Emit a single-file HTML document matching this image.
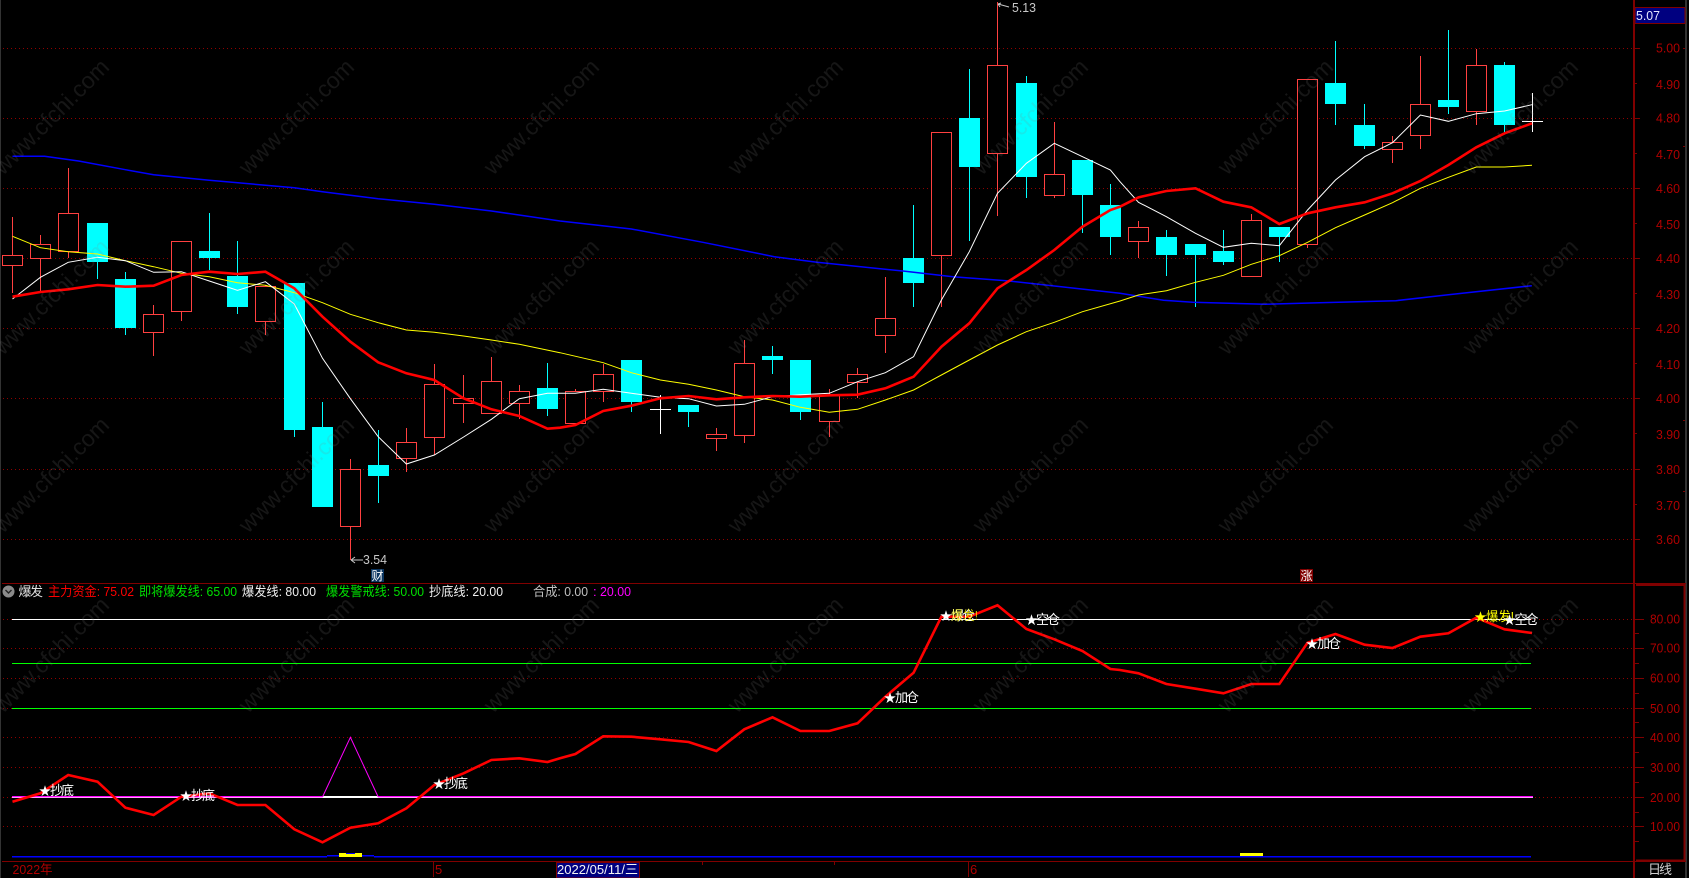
<!DOCTYPE html>
<html lang="zh">
<head>
<meta charset="utf-8">
<title>爆发</title>
<style>
html,body{margin:0;padding:0;background:#000;width:1689px;height:878px;overflow:hidden}
svg{display:block;position:absolute;left:0;top:0}
text{font-family:"Liberation Sans","Noto Sans CJK SC",sans-serif;font-size:13px}
.ax{fill:#b00000}
.wm text{font-size:23px;fill:rgba(128,128,128,.17)}
</style>
</head>
<body>
<svg width="1689" height="878" viewBox="0 0 1689 878" xmlns="http://www.w3.org/2000/svg">
<rect width="1689" height="878" fill="#000"/>
<rect x="0" y="0" width="1" height="878" fill="#333"/>
<rect x="1685" y="0" width="2" height="878" fill="#333"/>

<!-- grid -->
<path shape-rendering="crispEdges" stroke="#900000" stroke-width="1" stroke-dasharray="1 3" fill="none"
 d="M3 48.5H1634M3 118.5H1634M3 188.5H1634M3 258.5H1634M3 328.5H1634M3 398.5H1634M3 469.5H1634M3 539.5H1634
    M3 619.5H1634M3 648.5H1634M3 678.5H1634M3 708.5H1634M3 737.5H1634M3 767.5H1634M3 797.5H1634M3 826.5H1634"/>

<!-- candles: wicks -->
<path shape-rendering="crispEdges" stroke="#ff4040" stroke-width="1" fill="none"
 d="M12.5 217V293M40.5 235V293M68.5 168V258M265.5 285V335M350.5 459V560M153.5 305V356M181.5 241V321M406.5 428V472M434.5 364V455M463.5 375V423M491.5 357V413M519.5 385V419M575.5 389V425M603.5 364V402M716.5 428V451M744.5 340V443M829.5 389V437M857.5 368V398M885.5 277V353M941.5 132V307M997.5 2V216M1054.5 122V198M1138.5 221V258M1251.5 214V276M1307.5 79V248M1392.5 136V163M1420.5 56V149M1476.5 49V125"/>
<path shape-rendering="crispEdges" stroke="#00ffff" stroke-width="1" fill="none"
 d="M97.5 223V279M125.5 272V335M209.5 213V270M237.5 241V314M294.5 283V437M322.5 402V507M378.5 430V503M547.5 363V416M631.5 360V412M688.5 405V427M772.5 346V374M800.5 360V420M913.5 205V307M969.5 69V241M1026.5 76V198M1082.5 160V233M1110.5 184V255M1166.5 230V276M1195.5 244V307M1223.5 230V265M1279.5 227V262M1335.5 41V125M1364.5 104V149M1448.5 30V114M1504.5 62V132"/>
<path shape-rendering="crispEdges" stroke="#fff" stroke-width="1" fill="none"
 d="M660.5 395V434M650 409.5H671M1532.5 93V132M1522 121.5H1543"/>
<!-- candles: hollow red bodies -->
<path shape-rendering="crispEdges" stroke="#ff4040" stroke-width="1" fill="#000"
 d="M2.5 255.5h20v10h-20zM30.5 244.5h20v14h-20zM58.5 213.5h20v38h-20zM143.5 314.5h20v18h-20zM171.5 241.5h20v70h-20zM255.5 286.5h20v35h-20zM340.5 469.5h20v57h-20zM396.5 442.5h20v16h-20zM424.5 384.5h20v53h-20zM453.5 398.5h20v5h-20zM481.5 381.5h20v32h-20zM509.5 391.5h20v12h-20zM565.5 391.5h20v32h-20zM593.5 374.5h20v17h-20zM706.5 434.5h20v4h-20zM734.5 363.5h20v72h-20zM819.5 395.5h20v26h-20zM847.5 374.5h20v8h-20zM875.5 318.5h20v17h-20zM931.5 132.5h20v123h-20zM987.5 65.5h20v88h-20zM1044.5 174.5h20v21h-20zM1128.5 227.5h20v14h-20zM1241.5 220.5h20v56h-20zM1297.5 79.5h20v165h-20zM1382.5 142.5h20v7h-20zM1410.5 104.5h20v31h-20zM1466.5 65.5h20v46h-20z"/>
<!-- candles: filled cyan bodies -->
<path shape-rendering="crispEdges" fill="#00ffff"
 d="M87 223h21v39h-21zM115 279h21v49h-21zM199 251h21v7h-21zM227 276h21v31h-21zM284 283h21v147h-21zM312 427h21v80h-21zM368 465h21v11h-21zM537 388h21v21h-21zM621 360h21v42h-21zM678 405h21v7h-21zM762 356h21v4h-21zM790 360h21v52h-21zM903 258h21v25h-21zM959 118h21v49h-21zM1016 83h21v94h-21zM1072 160h21v35h-21zM1100 205h21v32h-21zM1156 237h21v18h-21zM1185 244h21v11h-21zM1213 251h21v11h-21zM1269 227h21v10h-21zM1325 83h21v21h-21zM1354 125h21v21h-21zM1438 100h21v7h-21zM1494 65h21v60h-21z"/>

<!-- moving averages -->
<polyline fill="none" stroke="#0000ff" stroke-width="1.5" points="12.5,156.3 44.6,156.3 78.6,161 125.4,169.7 153.6,174.7 209.3,180.3 294.3,187.7 322.5,191.7 378.2,198.7 434.3,204.3 491.4,211 560,221 631.4,229 702.9,242.3 774.3,256.7 817,262.3 902.9,271 952.9,276.7 1006.4,280.7 1120,293.3 1163.5,300.3 1192.6,302.3 1265,304.3 1319.6,302.7 1395.8,300.7 1448.4,294.7 1531.8,285.7"/>
<polyline fill="none" stroke="#ffff00" stroke-width="1" points="12.5,236.3 40.4,247.7 68.2,251.7 97.5,254 125.4,260.7 153.6,266.7 181.4,273.3 209.3,276.7 237.5,282.7 265.4,285.3 294.3,292.7 322.5,302.7 350.4,314.3 378.2,322.7 406.4,330 434.3,332.3 463.6,336 491.4,340 519.3,344.3 560,352.7 603.2,362.7 631.4,372.7 660.4,380 688.6,384.3 716.4,390 744.3,396.7 772.5,400 800.4,407.3 829.3,412.3 857.5,409.3 885.4,400 913.6,390 941.4,375 969.3,360 997.5,345 1026.4,331.7 1054.3,322.3 1082.5,311.7 1120,301 1138.5,295 1166.4,290.7 1195.5,282.3 1223.4,275.3 1251.3,264.3 1279.3,255.7 1307.6,242.3 1335.5,227.7 1364.6,215 1392.5,202.7 1420.4,188.3 1448.4,177.3 1476.3,167 1504.6,167 1532,165.3"/>
<polyline fill="none" stroke="#ffffff" stroke-width="1" points="12.5,299 40.4,277.3 68.2,262.3 97.5,257.3 125.4,260.7 153.6,272.3 181.4,271.7 209.3,281 237.5,290.3 265.4,281.7 294.3,304 322.5,358.3 350.4,398.7 378.2,436.7 406.4,464 434.3,455 463.6,437 491.4,419.3 519.3,398.7 547.5,393.3 575.4,393.3 603.2,389.3 631.4,393.3 660.4,397.3 688.6,398.7 716.4,406 744.3,404.3 772.5,396.7 800.4,394.7 829.3,393.3 857.5,381.7 885.4,372.7 913.6,356.7 941.4,300 969.3,251.7 997.5,193.3 1026.4,163.3 1054.3,143.3 1082.5,156.7 1110.4,170 1120,181.7 1138.5,202.3 1166.4,216.7 1195.5,233.3 1223.4,247.3 1251.3,243.3 1279.3,245.7 1307.6,210 1335.5,180 1364.6,156.7 1392.5,142.7 1420.4,115 1448.4,121.3 1476.3,113.7 1504.6,111 1532,104.7"/>
<polyline fill="none" stroke="#ff0000" stroke-width="2.6" points="12.5,296.7 40.4,292 68.2,289.3 97.5,285 125.4,286.7 153.6,285.7 181.4,275 209.3,271.7 237.5,274 265.4,271.7 294.3,288.3 322.5,316.7 350.4,341.7 378.2,362.3 406.4,373.3 434.3,380 463.6,398.3 491.4,409.3 519.3,416 547.5,428.7 560,427.7 575.4,425 603.2,411 631.4,405.7 660.4,398.3 688.6,396 716.4,399.3 744.3,397.3 772.5,396 800.4,396.7 829.3,395.3 857.5,394.7 885.4,388.3 913.6,376.7 941.4,346.7 969.3,323.3 997.5,288.3 1026.4,270 1054.3,250 1082.5,226.7 1110.4,210 1120,206.7 1138.5,197.3 1166.4,191 1195.5,188.3 1223.4,201.7 1251.3,207.3 1279.3,224 1307.6,213.3 1335.5,207.3 1364.6,202.3 1392.5,193.3 1420.4,181 1448.4,165 1476.3,147.3 1504.6,133.3 1532,123.3"/>

<!-- high/low labels -->
<path stroke="#c8c8c8" stroke-width="1" fill="none" d="M998 4L1009 7M998 4l3-1M998 4l2 3M351 560H363M351 560l4-3M351 560l4 3"/>
<text x="1012" y="12" fill="#c8c8c8" textLength="24" lengthAdjust="spacingAndGlyphs">5.13</text>
<text x="363" y="564" fill="#c8c8c8" textLength="24" lengthAdjust="spacingAndGlyphs">3.54</text>

<!-- markers -->
<rect x="371" y="569" width="13" height="13" fill="#0a3560"/>
<text x="371.5" y="580" fill="#fff" style="font-size:12px">财</text>
<rect x="1300" y="569" width="13" height="13" fill="#800000"/>
<text x="1300.5" y="580" fill="#fff" style="font-size:12px">涨</text>

<!-- panel frames -->
<path shape-rendering="crispEdges" stroke="#800000" stroke-width="1" fill="none" d="M2 583.5H1686M2 861.5H1686"/>
<path shape-rendering="crispEdges" stroke="#800000" stroke-width="2" fill="none" d="M1634 0V878M1636 585H1684.5V860.5H1636"/>

<!-- price axis -->
<path shape-rendering="crispEdges" stroke="#800000" stroke-width="1" fill="none"
 d="M1634 48.5h6M1634 83.5h3M1634 118.5h6M1634 153.5h3M1634 188.5h6M1634 223.5h3M1634 258.5h6M1634 293.5h3M1634 328.5h6M1634 363.5h3M1634 398.5h6M1634 433.5h3M1634 469.5h6M1634 504.5h3M1634 539.5h6
    M1635 619.5h9M1635 633.5h4M1635 648.5h9M1635 663.5h4M1635 678.5h9M1635 693.5h4M1635 708.5h9M1635 722.5h4M1635 737.5h9M1635 752.5h4M1635 767.5h9M1635 782.5h4M1635 797.5h9M1635 812.5h4M1635 826.5h9M1635 841.5h4
    M1683 48.5h2M1683 146.5h2M1683 420.5h2M1683 491.5h2"/>
<rect x="1635" y="7.5" width="50" height="16" fill="#000080" stroke="#800000" stroke-width="1"/>
<text x="1636" y="20" fill="#e8e8ff" textLength="24" lengthAdjust="spacingAndGlyphs">5.07</text>
<g class="ax">
<text x="1656" y="52.5" textLength="24" lengthAdjust="spacingAndGlyphs">5.00</text>
<text x="1656" y="89" textLength="24" lengthAdjust="spacingAndGlyphs">4.90</text>
<text x="1656" y="122.5" textLength="24" lengthAdjust="spacingAndGlyphs">4.80</text>
<text x="1656" y="159" textLength="24" lengthAdjust="spacingAndGlyphs">4.70</text>
<text x="1656" y="193" textLength="24" lengthAdjust="spacingAndGlyphs">4.60</text>
<text x="1656" y="229" textLength="24" lengthAdjust="spacingAndGlyphs">4.50</text>
<text x="1656" y="263" textLength="24" lengthAdjust="spacingAndGlyphs">4.40</text>
<text x="1656" y="299" textLength="24" lengthAdjust="spacingAndGlyphs">4.30</text>
<text x="1656" y="333" textLength="24" lengthAdjust="spacingAndGlyphs">4.20</text>
<text x="1656" y="369" textLength="24" lengthAdjust="spacingAndGlyphs">4.10</text>
<text x="1656" y="403" textLength="24" lengthAdjust="spacingAndGlyphs">4.00</text>
<text x="1656" y="439" textLength="24" lengthAdjust="spacingAndGlyphs">3.90</text>
<text x="1656" y="474" textLength="24" lengthAdjust="spacingAndGlyphs">3.80</text>
<text x="1656" y="510" textLength="24" lengthAdjust="spacingAndGlyphs">3.70</text>
<text x="1656" y="544" textLength="24" lengthAdjust="spacingAndGlyphs">3.60</text>
<text x="1650" y="623.5" textLength="30" lengthAdjust="spacingAndGlyphs">80.00</text>
<text x="1650" y="652.5" textLength="30" lengthAdjust="spacingAndGlyphs">70.00</text>
<text x="1650" y="682.5" textLength="30" lengthAdjust="spacingAndGlyphs">60.00</text>
<text x="1650" y="713" textLength="30" lengthAdjust="spacingAndGlyphs">50.00</text>
<text x="1650" y="742" textLength="30" lengthAdjust="spacingAndGlyphs">40.00</text>
<text x="1650" y="772" textLength="30" lengthAdjust="spacingAndGlyphs">30.00</text>
<text x="1650" y="802" textLength="30" lengthAdjust="spacingAndGlyphs">20.00</text>
<text x="1650" y="831" textLength="30" lengthAdjust="spacingAndGlyphs">10.00</text>
</g>

<!-- indicator header -->
<circle cx="8.5" cy="591.5" r="6" fill="#8a8a8a"/>
<path d="M5.5 590l3 3 3-3" fill="none" stroke="#222" stroke-width="1.4"/>
<text x="18.5" y="596" fill="#e0e0e0" textLength="24.5">爆发</text>
<text x="48" y="596" fill="#ff0000" textLength="86" lengthAdjust="spacingAndGlyphs">主力资金: 75.02</text>
<text x="139" y="596" fill="#00e000" textLength="98" lengthAdjust="spacingAndGlyphs">即将爆发线: 65.00</text>
<text x="242" y="596" fill="#f0f0f0" textLength="74" lengthAdjust="spacingAndGlyphs">爆发线: 80.00</text>
<text x="326" y="596" fill="#00e000" textLength="98" lengthAdjust="spacingAndGlyphs">爆发警戒线: 50.00</text>
<text x="429" y="596" fill="#f0f0f0" textLength="74" lengthAdjust="spacingAndGlyphs">抄底线: 20.00</text>
<text x="533" y="596" fill="#c0c0c0" textLength="55" lengthAdjust="spacingAndGlyphs">合成: 0.00</text>
<text x="593" y="596" fill="#ff00ff">:</text>
<text x="600" y="596" fill="#ff00ff" textLength="31" lengthAdjust="spacingAndGlyphs">20.00</text>

<!-- indicator lines -->
<path shape-rendering="crispEdges" stroke="#ffffff" stroke-width="1" d="M12 619.5H1531"/>
<path shape-rendering="crispEdges" stroke="#00ff00" stroke-width="1" d="M12 663.5H1531M12 708.5H1531"/>
<path shape-rendering="crispEdges" stroke="#ff00ff" stroke-width="1" d="M12 796.5H1533"/>
<path shape-rendering="crispEdges" stroke="#ffa0ff" stroke-width="1" d="M12 797.5H1533"/>
<path shape-rendering="crispEdges" stroke="#ffffff" stroke-width="2" d="M322.5 797H378"/>
<polyline fill="none" stroke="#ff00ff" stroke-width="1" points="322.5,797 350.4,737.3 378.2,797"/>
<path shape-rendering="crispEdges" fill="#ffff00" d="M1240 853h23v3h-23z"/>
<path shape-rendering="crispEdges" fill="none" stroke="#0000ff" stroke-width="1.5" d="M12 856.5H327M327 855.5H339M362 855.5H374M374 856.5H1531"/>
<path shape-rendering="crispEdges" fill="#ffff00" d="M339 853h23v4h-23z"/>
<path shape-rendering="crispEdges" fill="#0000ff" d="M346 853h9v1h-9z"/>
<polyline fill="none" stroke="#ff0000" stroke-width="2.6" points="12.5,801.7 40.4,793.3 68.2,775 97.5,781.7 125.4,807.7 153.6,815 181.4,796.7 209.3,793.3 237.5,805 265.4,805 294.3,829.3 322.5,842.3 350.4,827.7 378.2,823.3 406.4,808.3 434.3,785 463.6,773.3 491.4,760 519.3,758.3 547.5,762 560,758.3 575.4,754 603.2,736.3 631.4,736.7 660.4,739.3 688.6,742 716.4,751 744.3,729.3 772.5,717.3 800.4,731 829.3,731 857.5,723.3 885.4,696.7 913.6,672.7 941.4,616.7 969.3,616.7 997.5,605.3 1026.4,629 1054.3,639.3 1082.5,651 1110.4,669 1120,670 1138.5,673.3 1166.4,684 1195.5,688.7 1223.4,693.3 1251.3,684 1279.3,684 1307.6,642.7 1335.5,634 1364.6,644.7 1392.5,648 1420.4,636.7 1448.4,633.3 1476.3,617.7 1504.6,629.3 1532,633"/>

<!-- annotations -->
<g fill="#fff">
<text x="39" y="795" style="font-size:12px">★</text><text x="50" y="795" textLength="24">抄底</text>
<text x="180" y="800" style="font-size:12px">★</text><text x="191" y="800" textLength="24">抄底</text>
<text x="433" y="788" style="font-size:12px">★</text><text x="444" y="788" textLength="24">抄底</text>
<text x="884" y="702" style="font-size:12px">★</text><text x="895" y="702" textLength="24">加仓</text>
<text x="940" y="620" style="font-size:12px">★</text><text x="951" y="620" textLength="24">爆仓</text>
<text x="1025.5" y="624" style="font-size:12px">★</text><text x="1036" y="624" textLength="24">空仓</text>
<text x="1306" y="648" style="font-size:12px">★</text><text x="1317" y="648" textLength="24">加仓</text>
</g>
<text x="951" y="620" fill="#ffff00" fill-opacity=".75" textLength="27" lengthAdjust="spacingAndGlyphs">爆发!</text>
<text x="1474.5" y="621" fill="#ffff00" style="font-size:12px">★</text>
<text x="1486" y="621" fill="#ffff00" textLength="28" lengthAdjust="spacingAndGlyphs">爆发!</text>
<text x="1503.5" y="624" fill="#fff" style="font-size:12px">★</text>
<text x="1514.5" y="624" fill="#fff" textLength="24">空仓</text>

<!-- date axis -->
<path shape-rendering="crispEdges" stroke="#800000" stroke-width="1" fill="none" d="M433.5 862V877M968.5 862V877M702.5 862V865M834.5 862V865"/>
<text x="12.5" y="874" fill="#b00000" textLength="40" lengthAdjust="spacingAndGlyphs">2022年</text>
<text x="435" y="874" fill="#b00000">5</text>
<text x="970" y="874" fill="#b00000">6</text>
<rect x="556.5" y="862.5" width="83" height="15.5" fill="#000080" stroke="#800000" stroke-width="1"/>
<text x="557" y="874" fill="#f4f4f4" textLength="81" lengthAdjust="spacingAndGlyphs">2022/05/11/三</text>
<text x="1648" y="874" fill="#d0d0d0" textLength="24">日线</text>

<!-- watermarks -->
<g class="wm">
<text transform="translate(3 176) rotate(-45)">www.cfchi.com</text>
<text transform="translate(248 176) rotate(-45)">www.cfchi.com</text>
<text transform="translate(493 176) rotate(-45)">www.cfchi.com</text>
<text transform="translate(737 176) rotate(-45)">www.cfchi.com</text>
<text transform="translate(982 176) rotate(-45)">www.cfchi.com</text>
<text transform="translate(1227 176) rotate(-45)">www.cfchi.com</text>
<text transform="translate(1472 176) rotate(-45)">www.cfchi.com</text>
<text transform="translate(3 356) rotate(-45)">www.cfchi.com</text>
<text transform="translate(248 356) rotate(-45)">www.cfchi.com</text>
<text transform="translate(493 356) rotate(-45)">www.cfchi.com</text>
<text transform="translate(737 356) rotate(-45)">www.cfchi.com</text>
<text transform="translate(982 356) rotate(-45)">www.cfchi.com</text>
<text transform="translate(1227 356) rotate(-45)">www.cfchi.com</text>
<text transform="translate(1472 356) rotate(-45)">www.cfchi.com</text>
<text transform="translate(3 534) rotate(-45)">www.cfchi.com</text>
<text transform="translate(248 534) rotate(-45)">www.cfchi.com</text>
<text transform="translate(493 534) rotate(-45)">www.cfchi.com</text>
<text transform="translate(737 534) rotate(-45)">www.cfchi.com</text>
<text transform="translate(982 534) rotate(-45)">www.cfchi.com</text>
<text transform="translate(1227 534) rotate(-45)">www.cfchi.com</text>
<text transform="translate(1472 534) rotate(-45)">www.cfchi.com</text>
<text transform="translate(3 714) rotate(-45)">www.cfchi.com</text>
<text transform="translate(248 714) rotate(-45)">www.cfchi.com</text>
<text transform="translate(493 714) rotate(-45)">www.cfchi.com</text>
<text transform="translate(737 714) rotate(-45)">www.cfchi.com</text>
<text transform="translate(982 714) rotate(-45)">www.cfchi.com</text>
<text transform="translate(1227 714) rotate(-45)">www.cfchi.com</text>
<text transform="translate(1472 714) rotate(-45)">www.cfchi.com</text>
</g>
</svg>
</body>
</html>
